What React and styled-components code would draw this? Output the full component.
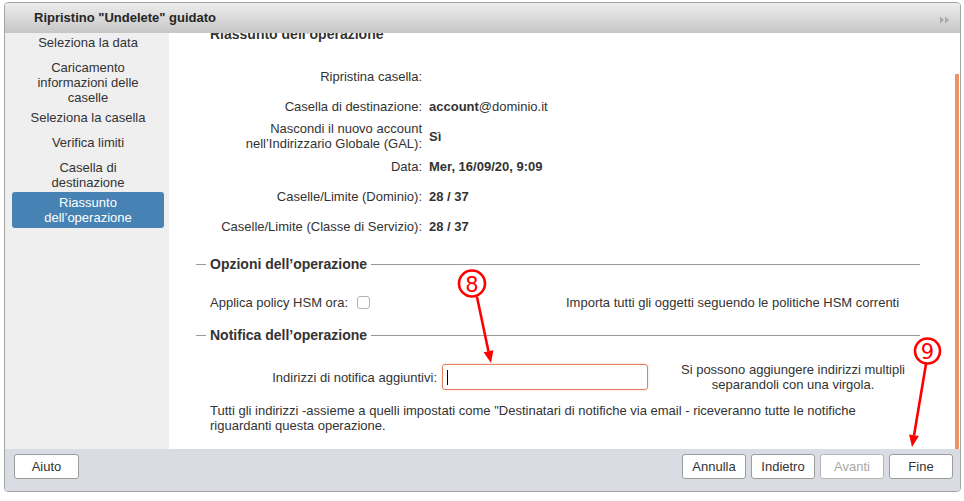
import React from 'react';
import styled, { createGlobalStyle } from 'styled-components';

const GlobalStyle = createGlobalStyle`
  html, body {
    margin: 0;
    padding: 0;
    background: #fff;
  }
  body {
    font-family: "Liberation Sans", Arial, sans-serif;
    font-size: 13px;
    color: #333;
  }
`;

const steps = [
  { label: 'Seleziona la data' },
  { label: 'Caricamento informazioni delle caselle', multi: true },
  { label: 'Seleziona la casella' },
  { label: 'Verifica limiti' },
  { label: 'Casella di destinazione', multi: true },
  { label: 'Riassunto dell’operazione', selected: true },
];

const App = () => {
  // rows of the summary table (label on the left, value on the right)
  const summary = [
    { label: 'Ripristina casella:', value: '' },
    {
      label: 'Casella di destinazione:',
      value: (
        <>
          <b>account</b>
          <Plain>@dominio.it</Plain>
        </>
      ),
    },
    {
      label: (
        <>
          Nascondi il nuovo account
          <br />
          nell’Indirizzario Globale (GAL):
        </>
      ),
      value: <b>Sì</b>,
    },
    { label: 'Data:', value: <b>Mer, 16/09/20, 9:09</b> },
    { label: 'Caselle/Limite (Dominio):', value: <b>28 / 37</b> },
    { label: 'Caselle/Limite (Classe di Servizio):', value: <b>28 / 37</b> },
  ];

  return (
    <>
      <GlobalStyle />
      <Page>
        <Dialog>
          <TitleBar>
            <span>Ripristino "Undelete" guidato</span>
            <svg width="10" height="8" viewBox="0 0 10 8">
              <polygon points="0,0.5 4,4 0,7.5" fill="#a9a9a9" />
              <polygon points="5,0.5 9,4 5,7.5" fill="#a9a9a9" />
            </svg>
          </TitleBar>

          <Body>
            <Nav>
              <NavList>
                {steps.map((s, i) => (
                  <NavItem key={i} $multi={s.multi} $selected={s.selected}>
                    {s.label}
                  </NavItem>
                ))}
              </NavList>
            </Nav>

            <Main>
              <Content>
                <Scrolled>
                  <Heading>Riassunto dell’operazione</Heading>

                  <Summary>
                    {summary.map((row, i) => (
                      <React.Fragment key={i}>
                        <Label>{row.label}</Label>
                        <Value>{row.value}</Value>
                      </React.Fragment>
                    ))}
                  </Summary>

                  <Legend $top={15}>Opzioni dell’operazione</Legend>
                  <OptionRow>
                    <Inline>
                      Applica policy HSM ora:
                      <Checkbox />
                    </Inline>
                    <span>Importa tutti gli oggetti seguendo le politiche HSM correnti</span>
                  </OptionRow>

                  <Legend $top={10}>Notifica dell’operazione</Legend>
                  <NotifyRow>
                    <Label>Indirizzi di notifica aggiuntivi:</Label>
                    <FakeInput>
                      <Caret />
                    </FakeInput>
                    <Help>Si possono aggiungere indirizzi multipli separandoli con una virgola.</Help>
                  </NotifyRow>
                  <Note>
                    Tutti gli indirizzi -assieme a quelli impostati come "Destinatari di notifiche via
                    email - riceveranno tutte le notifiche riguardanti questa operazione.
                  </Note>
                </Scrolled>
              </Content>
              <ScrollTrack>
                <Thumb $offset={41} />
              </ScrollTrack>
            </Main>
          </Body>

          <Footer>
            <Button $w={65}>Aiuto</Button>
            <ButtonGroup>
              <Button>Annulla</Button>
              <Button>Indietro</Button>
              <Button disabled>Avanti</Button>
              <Button>Fine</Button>
            </ButtonGroup>
          </Footer>
        </Dialog>

        {/* callout annotations drawn over the screenshot */}
        <Overlay width="964" height="501" viewBox="0 0 964 501">
          <g stroke="#f00" strokeWidth="2.6" fill="none">
            <circle cx="472" cy="283.5" r="13" fill="#fff" />
            <line x1="477" y1="297" x2="488.5" y2="351.5" />
            <circle cx="927.5" cy="351" r="12.5" fill="#fff" />
            <line x1="926" y1="364" x2="914" y2="435.5" />
          </g>
          <polygon points="491,363 493.4,350.2 483.6,352.3" fill="#f00" />
          <polygon points="912,447 909.1,434.4 918.9,436" fill="#f00" />
          <CalloutNumber x="472" y="291.5">8</CalloutNumber>
          <CalloutNumber x="927.5" y="359">9</CalloutNumber>
        </Overlay>
      </Page>
    </>
  );
};

const Page = styled.div`
  position: relative;
  width: 964px;
  height: 501px;
  box-sizing: border-box;
  padding: 2px 0 0 4px;
  overflow: hidden;
`;

const Dialog = styled.div`
  width: 957px;
  height: 490px;
  box-sizing: border-box;
  border: 1px solid #a4a4a4;
  border-radius: 4px;
  background: #fff;
  display: flex;
  flex-direction: column;
  overflow: hidden;
`;

const TitleBar = styled.div`
  flex: none;
  height: 30px;
  box-sizing: border-box;
  padding: 0 10px 2px 29px;
  display: flex;
  align-items: center;
  justify-content: space-between;
  background: linear-gradient(#ededed, #c6c6c6);
  font-weight: bold;
  color: #262626;
  svg {
    margin-top: 5px;
  }
`;

const Body = styled.div`
  flex: 1;
  display: flex;
  min-height: 0;
`;

const Nav = styled.div`
  flex: none;
  width: 164px;
  background: #efefef;
  overflow: hidden;
`;

const NavList = styled.div`
  margin-top: -3px;
  padding: 0 5px 0 7px;
  display: flex;
  flex-direction: column;
`;

const NavItem = styled.div`
  text-align: center;
  line-height: 15px;
  padding: ${(p) => (p.$selected ? '3px 11px' : p.$multi ? '5px 11px 0' : '5px 11px')};
  margin-top: ${(p) => (p.$selected ? '2px' : '0')};
  border-radius: 3px;
  background: ${(p) => (p.$selected ? '#4682b4' : 'transparent')};
  color: ${(p) => (p.$selected ? '#fff' : '#333')};
`;

const Main = styled.div`
  flex: 1;
  display: flex;
  background: #fff;
  min-width: 0;
`;

const Content = styled.div`
  flex: 1;
  overflow: hidden;
  padding: 0 35px 0 27px;
`;

const Scrolled = styled.div`
  margin-top: -7px;
`;

const Heading = styled.div`
  font-size: 14px;
  font-weight: bold;
  line-height: 17px;
  padding-left: 14px;
`;

const Summary = styled.div`
  margin-top: 18px;
  padding-left: 14px;
  display: grid;
  grid-template-columns: 212px 1fr;
  grid-auto-rows: 30px;
  column-gap: 7px;
  align-items: center;
  line-height: 15px;
`;

const Label = styled.div`
  text-align: right;
`;

const Value = styled.div`
  b {
    font-weight: bold;
  }
`;

const Plain = styled.span`
  font-weight: normal;
`;

const Legend = styled.div`
  margin-top: ${(p) => p.$top}px;
  height: 16px;
  display: flex;
  align-items: center;
  gap: 4px;
  font-size: 14px;
  font-weight: bold;
  &::before,
  &::after {
    content: '';
    height: 1px;
    background: #9a9a9a;
  }
  &::before {
    width: 10px;
  }
  &::after {
    flex: 1;
  }
`;

const OptionRow = styled.div`
  margin-top: 15px;
  height: 30px;
  padding-left: 14px;
  display: grid;
  grid-template-columns: 356px 1fr;
  align-items: center;
`;

const Inline = styled.div`
  display: flex;
  align-items: center;
  gap: 9px;
`;

const Checkbox = styled.span`
  width: 11px;
  height: 11px;
  border: 1px solid #b4b4b4;
  border-radius: 3px;
  background: #fff;
`;

const NotifyRow = styled.div`
  margin-top: 19px;
  height: 30px;
  padding-left: 14px;
  display: grid;
  grid-template-columns: 227px 206px 263px;
  column-gap: 5px;
  align-items: center;
  line-height: 15px;
`;

const FakeInput = styled.div`
  height: 26px;
  box-sizing: border-box;
  border: 1px solid #e2805f;
  border-radius: 3px;
  box-shadow: 0 0 2px rgba(232, 128, 95, 0.45);
  display: flex;
  align-items: center;
  padding-left: 4px;
`;

const Caret = styled.span`
  width: 1px;
  height: 15px;
  background: #000;
`;

const Help = styled.div`
  padding-left: 17px;
  text-align: center;
`;

const Note = styled.div`
  margin-top: 11px;
  padding-left: 14px;
  line-height: 15px;
`;

const ScrollTrack = styled.div`
  flex: none;
  width: 5px;
  display: flex;
  flex-direction: column;
`;

const Thumb = styled.div`
  margin-top: ${(p) => p.$offset}px;
  flex: 1;
  width: 4px;
  background: #ef9169;
`;

const Footer = styled.div`
  flex: none;
  height: 42px;
  box-sizing: border-box;
  padding: 5px 7px 0 9px;
  background: #d9dde3;
  display: flex;
  justify-content: space-between;
  align-items: flex-start;
`;

const ButtonGroup = styled.div`
  display: flex;
  gap: 5px;
`;

const Button = styled.button`
  width: ${(p) => p.$w || 64}px;
  height: 25px;
  padding: 0;
  background: #fff;
  border: 1px solid ${(p) => (p.disabled ? '#b8b8b8' : '#9c9c9c')};
  border-radius: 3px;
  font-family: "Liberation Sans", Arial, sans-serif;
  font-size: 13px;
  color: ${(p) => (p.disabled ? '#a8a8a8' : '#333')};
`;

const Overlay = styled.svg`
  position: absolute;
  top: 0;
  left: 0;
  pointer-events: none;
`;

const CalloutNumber = styled.text`
  font-family: "DejaVu Sans", sans-serif;
  font-size: 21px;
  fill: #f00;
  text-anchor: middle;
`;

export default App;
